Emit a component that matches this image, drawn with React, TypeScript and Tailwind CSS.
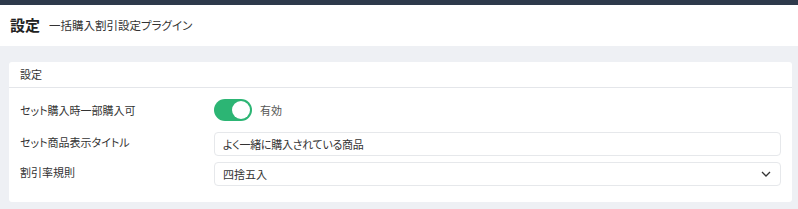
import React, { useState } from 'react';

const jp = "font-['Noto_Sans_CJK_JP','Noto_Sans',sans-serif] [font-feature-settings:'palt']";

export default function App() {
  const [enabled, setEnabled] = useState(true);
  const [title, setTitle] = useState('よく一緒に購入されている商品');
  const [rule, setRule] = useState('四捨五入');

  return (
    <div className={`min-h-[209px] bg-[#eef0f4] ${jp}`}>
      {/* 上部バー */}
      <div className="h-[5px] bg-[#2e3a4b]" />
      <div className="flex h-[41px] items-center gap-[9px] bg-white px-[10px]">
        <h1 className="text-[15px] font-bold text-[#222]">設定</h1>
        <span className="text-[11.5px] text-[#333]">一括購入割引設定プラグイン</span>
      </div>

      <div className="pl-[9px] pr-[6px] pt-[16px] pb-[7px]">
        <div className="rounded-[3px] bg-white">
          <div className="flex h-[26px] items-center border-b border-[#e4e6ea] px-[11px] text-[11px] text-[#333]">
            設定
          </div>
          <div className="px-[11px] pt-[10px] pb-[16px] text-[11px] text-[#333]">
            <div className="grid grid-cols-[194px_1fr] items-center">
              <div>セット購入時一部購入可</div>
              <div className="flex h-[24px] items-center gap-[8px]">
                <button
                  type="button"
                  onClick={() => setEnabled(!enabled)}
                  className={`relative h-[22px] w-[38px] rounded-full ${enabled ? 'bg-[#2cb574]' : 'bg-[#ccc]'}`}
                >
                  <span
                    className={`absolute top-[2px] h-[18px] w-[18px] rounded-full bg-white ${enabled ? 'left-[18px]' : 'left-[2px]'}`}
                  />
                </button>
                <span className="text-[#555]">有効</span>
              </div>
            </div>

            <div className="mt-[10px] grid grid-cols-[194px_1fr] items-start">
              <div className="pt-[2px]">セット商品表示タイトル</div>
              <input
                value={title}
                onChange={(e) => setTitle(e.target.value)}
                className="h-[24px] w-full rounded-[4px] border border-[#e6e8eb] px-[8px] text-[11px] tracking-[-0.3px] text-[#333] outline-none"
              />
            </div>

            <div className="mt-[6px] grid grid-cols-[194px_1fr] items-start">
              <div className="pt-[2px]">割引率規則</div>
              <div className="relative">
                <select
                  value={rule}
                  onChange={(e) => setRule(e.target.value)}
                  className="h-[24px] w-full appearance-none rounded-[4px] border border-[#e6e8eb] bg-white px-[8px] text-[11px] text-[#333] outline-none"
                >
                  <option>四捨五入</option>
                  <option>切り捨て</option>
                  <option>切り上げ</option>
                </select>
                <svg
                  className="pointer-events-none absolute right-[10px] top-[9px]"
                  width="10"
                  height="6"
                  viewBox="0 0 10 6"
                  fill="none"
                >
                  <path d="M1 1l4 4 4-4" stroke="#333" strokeWidth="1.3" />
                </svg>
              </div>
            </div>
          </div>
        </div>
      </div>
    </div>
  );
}
